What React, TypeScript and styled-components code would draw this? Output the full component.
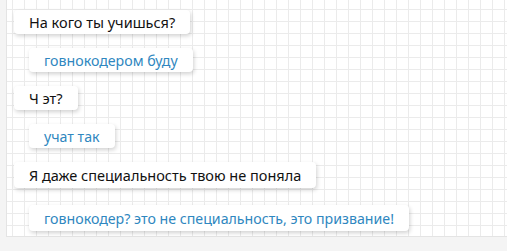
import styled, { createGlobalStyle } from "styled-components";

const GlobalStyle = createGlobalStyle`
  html, body {
    margin: 0;
    padding: 0;
    background: #f4f4f4;
  }
`;

const Page = styled.div`
  width: 507px;
  height: 251px;
  background: #f4f4f4;
  overflow: hidden;
`;

// graph paper panel
const Paper = styled.div`
  margin-left: 6px;
  height: 237px;
  box-sizing: border-box;
  border-left: 1px solid #e4e4e4;
  border-bottom: 1px solid #e4e4e4;
  background-color: #ffffff;
  background-image: linear-gradient(to right, #ebebeb 1px, transparent 1px),
    linear-gradient(to bottom, #ebebeb 1px, transparent 1px);
  background-size: 12px 12px;
  background-position: 5px 9px;
  padding: 10px 0 0 7px;
  display: flex;
  flex-direction: column;
  align-items: flex-start;
  gap: 14px;
`;

const Bubble = styled.div<{ $reply?: boolean; $tall?: boolean }>`
  margin-left: ${({ $reply }) => ($reply ? "15px" : "0")};
  height: ${({ $tall }) => ($tall ? "26px" : "24px")};
  padding: 0 15px 0 15px;
  display: flex;
  align-items: center;
  background: #ffffff;
  border-radius: 4px;
  box-shadow: 1px 2px 4px rgba(0, 0, 0, 0.18);
  font-family: "Noto Sans", "DejaVu Sans", sans-serif;
  font-size: ${({ $reply }) => ($reply ? "14.2px" : "14.5px")};
  color: ${({ $reply }) => ($reply ? "#2f87c0" : "#111111")};
  white-space: nowrap;
`;

const LastBubble = styled(Bubble)`
  margin-top: 3px;
`;

export default function App() {
  return (
    <Page>
      <GlobalStyle />
      <Paper>
        <Bubble>На кого ты учишься?</Bubble>
        <Bubble $reply>говнокодером буду</Bubble>
        <Bubble>Ч эт?</Bubble>
        <Bubble $reply>учат так</Bubble>
        <Bubble $tall>Я даже специальность твою не поняла</Bubble>
        <LastBubble $reply $tall>
          говнокодер? это не специальность, это призвание!
        </LastBubble>
      </Paper>
    </Page>
  );
}
